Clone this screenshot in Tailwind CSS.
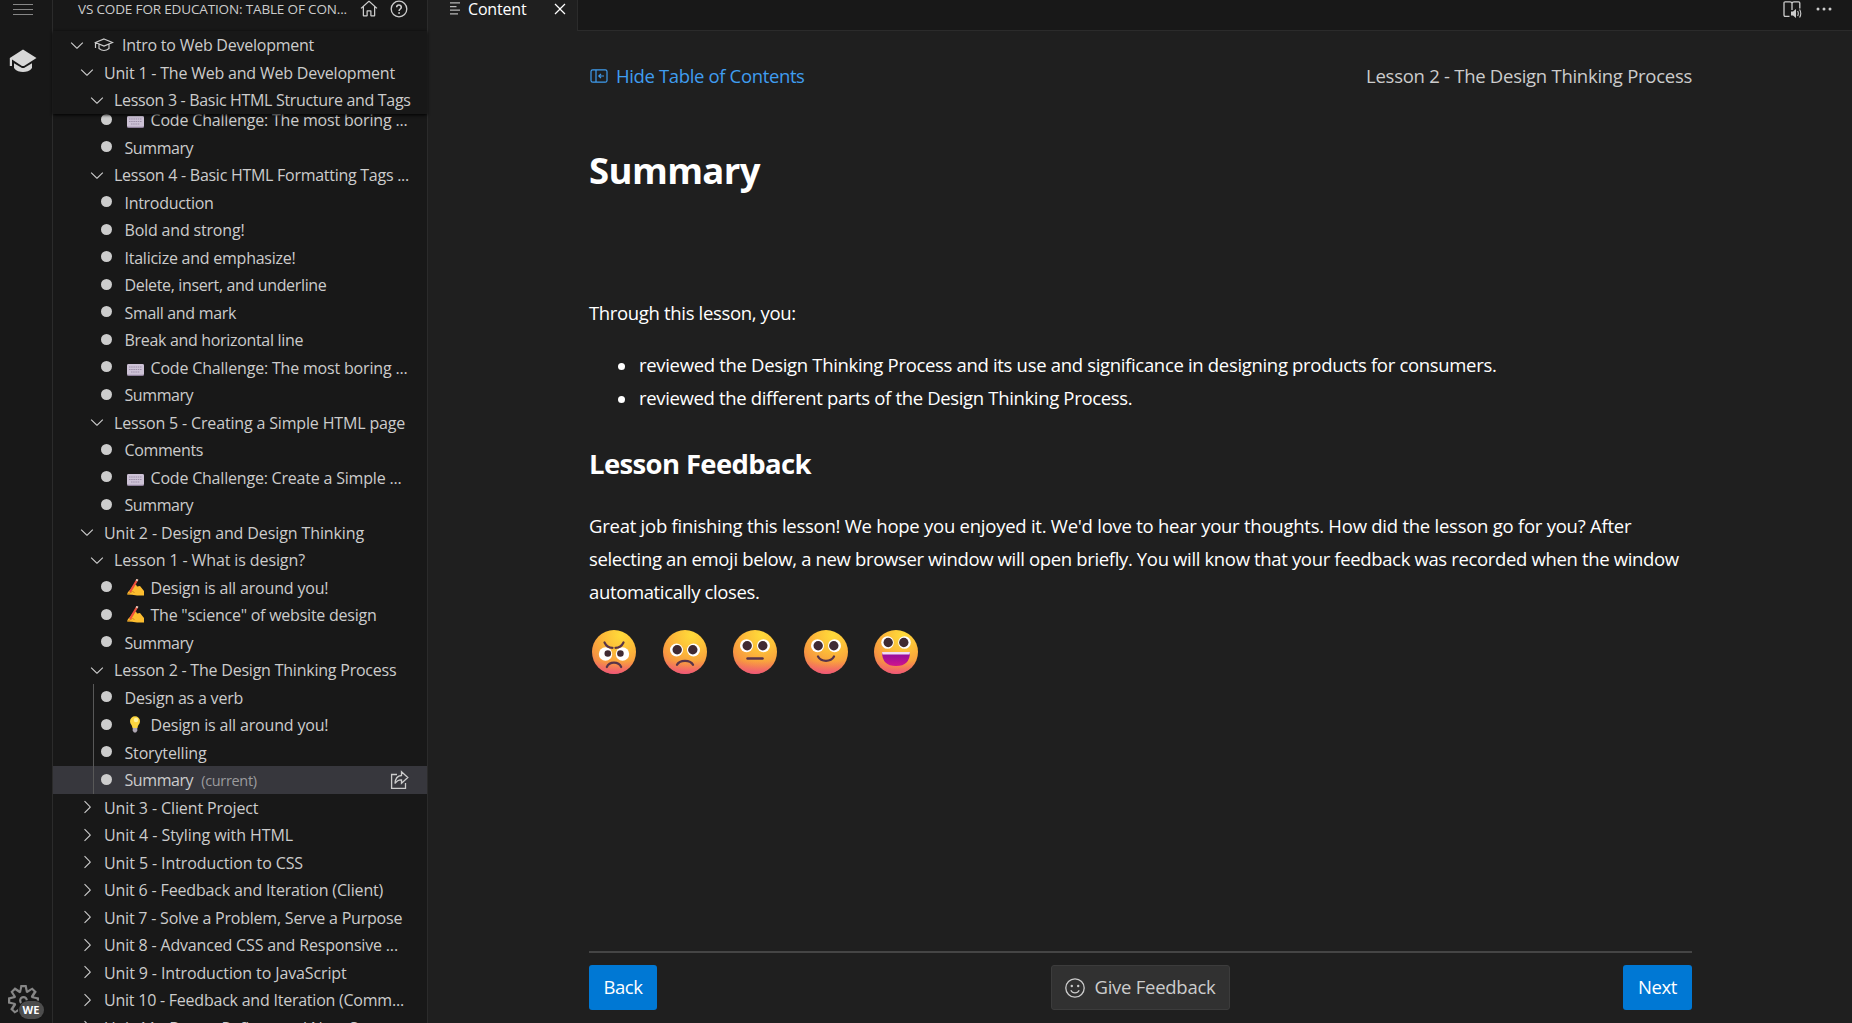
<!DOCTYPE html>
<html lang="en">
<head>
<meta charset="utf-8">
<title>VS Code for Education</title>
<script src="https://cdn.jsdelivr.net/npm/@tailwindcss/browser@4"></script>
</head>
<body class="h-[1023px] w-[1852px] overflow-hidden bg-[#1f1f1f] font-['Open_Sans','Noto_Sans',sans-serif] text-[#cccccc]">
<svg class="absolute h-0 w-0">
  <defs>
    <radialGradient id="face" cx=".65" cy=".12" r=".95"><stop offset="0" stop-color="#ffdb3a"/><stop offset=".4" stop-color="#fcbc38"/><stop offset=".75" stop-color="#f79840"/><stop offset="1" stop-color="#f0705c"/></radialGradient>
    <linearGradient id="chin" x1="0" y1="0" x2="0" y2="1"><stop offset=".7" stop-color="#f4646c" stop-opacity="0"/><stop offset="1" stop-color="#f0527c" stop-opacity=".9"/></linearGradient>
    <linearGradient id="mouth" x1="0" y1="0" x2="0" y2="1"><stop offset="0" stop-color="#8a0ca0"/><stop offset="1" stop-color="#d0148c"/></linearGradient>
    <g id="head"><circle cx="22" cy="22" r="22" fill="url(#face)"/><circle cx="22" cy="22" r="22" fill="url(#chin)"/></g>
  </defs>
</svg>
<div class="flex h-full">
  <nav class="flex w-[53px] shrink-0 flex-col items-center justify-between border-r border-[#2b2b2b] bg-[#181818]">
    <div class="flex flex-col items-center">
      <svg class="mt-[3px] ml-[-6px] h-[14px] w-5" viewBox="0 0 20 14" stroke="#868686" stroke-width="1"><path d="M0 1.5h20M0 6.5h20M0 11.5h20"/></svg>
      <svg class="mt-[32px] ml-[-6px] h-[24px] w-[28px]" viewBox="0 0 28 24" fill="#d7d7d7"><path d="M14 .5 27.5 9 15 17h-2L3 10.5V17H.8V9z"/><path d="M5 14.2 13 19h2l8-4.800V19c-2 3-6 4-9 4s-7-1-9-4z"/></svg>
    </div>
    <div class="relative mr-[6px] mb-[7px] h-[31px] w-[31px]">
      <svg class="h-[31px] w-[31px]" viewBox="1 1 14 14" fill="#868686"><path d="M9.1 4.400L8.600 2H7.400l-.5 2.400-.7.3-2-1.300-.9.8 1.300 2-.2.7-2.400.5v1.200l2.400.5.3.8-1.300 2 .8.8 2-1.300.8.3.4 2.300h1.200l.5-2.400.8-.3 2 1.300.8-.8-1.300-2 .3-.8 2.300-.4V7.400l-2.400-.5-.3-.8 1.300-2-.8-.8-2 1.300-.7-.2zM9.400 1l.5 2.400L12 2.100l2 2-1.400 2.100 2.400.4v2.800l-2.400.5L14 12l-2 2-2.100-1.400-.5 2.400H6.600l-.5-2.400L4 13.900l-2-2 1.400-2.100L1 9.400V6.600l2.400-.5L2.100 4l2-2 2.100 1.400.4-2.400h2.800zm.6 7c0 1.100-.9 2-2 2s-2-.9-2-2 .9-2 2-2 2 .9 2 2zM8 9c.6 0 1-.4 1-1s-.4-1-1-1-1 .4-1 1 .4 1 1 1z"/></svg>
      <span class="absolute top-[16px] left-[11px] flex h-[18px] w-[25px] items-center justify-center rounded-full bg-[#4d4d4d] text-[11px] font-bold text-white ring-1 ring-[#181818]">WE</span>
    </div>
  </nav>
  <aside class="flex w-[375px] shrink-0 flex-col border-r border-[#2b2b2b] bg-[#181818]">
    <header class="flex h-[31px] shrink-0 items-start pl-[25px]">
      <span class="w-[281px] text-[13.500px] leading-[18px] tracking-[-0.150px] whitespace-nowrap">VS CODE FOR EDUCATION: TABLE OF CON...</span>
      <svg class="mt-[-1px] h-5 w-5" viewBox="0 0 16 16" fill="#cccccc"><path d="M8.360 1.370l6.360 5.800-.71.71L13 6.964v6.526l-.5.5h-3l-.5-.5v-3.500H7v3.500l-.5.5h-3l-.5-.5V6.972L2 7.880l-.71-.71 6.350-5.800h.72zM4 6.063v6.927h2v-3.500l.5-.5h3l.5.5v3.500h2V6.057L8 2.430 4 6.063z"/></svg>
      <svg class="mt-[-1px] ml-[10px] h-5 w-5" viewBox="0 0 20 20" fill="none" stroke="#cccccc"><circle cx="10" cy="10" r="7.800" stroke-width="1.300"/><path d="M7.700 8.300c0-3 4.600-3 4.600-.1 0 1.800-2.200 1.800-2.200 3.800" stroke-width="1.600"/><path d="M9.200 13.200h1.800v1.600h-1.800z" fill="#cccccc" stroke="none"/></svg>
    </header>
    <div id="pinned" class="relative z-10 shrink-0 bg-[#181818] shadow-[0_1px_3px_#000]"></div>
    <div class="min-h-0 grow overflow-hidden"><div id="tree" class="mt-[-7.500px]"></div></div>
  </aside>
  <main class="flex min-w-0 grow flex-col">
    <div class="flex h-[31px] shrink-0">
      <div class="flex w-[150px] shrink-0 items-start border-r border-[#2b2b2b] pl-[22px]">
        <svg class="mt-[2px] h-[13px] w-[11px]" viewBox="0 0 11 13" stroke="#b8b8b8" stroke-width="1.200"><path d="M0 .8h10M0 4.600h6.500M0 8.200h10M0 11.800h8"/></svg>
        <span class="ml-[7px] w-[82px] text-[16px] leading-[19px] tracking-[-0.170px] whitespace-nowrap text-white">Content</span>
        <svg class="mt-[-1px] h-5 w-5" viewBox="0 0 16 16" fill="#fff"><path d="M8 8.707l3.646 3.647.708-.707L8.707 8l3.647-3.646-.707-.708L8 7.293 4.354 3.646l-.707.708L7.293 8l-3.646 3.646.707.708L8 8.707z"/></svg>
      </div>
      <div class="flex grow items-start justify-end border-b border-[#2b2b2b] bg-[#181818] pr-[20px]">
        <svg class="mt-[1px] h-[18px] w-[19px]" viewBox="0 0 19 18" fill="none" stroke="#cccccc" stroke-width="1.300"><path d="M6.500 15.300H2.200Q1 15.300 1 14V2Q1 .8 2.200.8H7q1.800 0 2 1.500V9M9 2.300Q9.200.8 11 .8h4.500q1.300 0 1.300 1.200v5.500"/><path d="M8 10.600h2l3-2.600v9l-3-2.600H8z" fill="#cccccc" stroke="none"/><path d="M14.600 10q1.400 2.300 0 5M16.600 8.500q2.400 4 0 8" stroke-width="1.100"/></svg>
        <svg class="mt-[7px] ml-[14px] h-1 w-4" viewBox="0 0 16 4" fill="#cccccc"><circle cx="2" cy="2" r="1.500"/><circle cx="8" cy="2" r="1.500"/><circle cx="14" cy="2" r="1.500"/></svg>
      </div>
    </div>
    <section class="ml-[161px] flex w-[1103px] grow flex-col text-[18.500px] leading-[33px] tracking-[-0.340px] whitespace-nowrap text-white">
      <div class="mt-[28px] flex justify-between text-[#cccccc]">
        <a class="flex items-center gap-[8px] pl-px text-[#3f9df0]">
          <svg class="h-[14px] w-[18px]" viewBox="0 0 18 14" fill="none" stroke="currentColor" stroke-width="1.200"><rect x="1" y=".8" width="16" height="12.400" rx="1.800"/><path d="M6 1v12M14 7H9M11 4.800 8.800 7 11 9.200"/></svg>
          <span class="tracking-[-0.360px]">Hide Table of Contents</span>
        </a>
        <span class="tracking-[-0.270px]">Lesson 2 - The Design Thinking Process</span>
      </div>
      <h1 class="mt-[52px] text-[36.500px] leading-[52px] font-bold tracking-[-0.600px]">Summary</h1>
      <p class="mt-[100px]">Through this lesson, you:</p>
      <ul class="mt-[19px] pl-[29px]">
        <li class="flex items-center gap-[14px] tracking-[-0.320px]"><i class="mt-1 size-[7px] rounded-full bg-white"></i>reviewed the Design Thinking Process and its use and significance in designing products for consumers.</li>
        <li class="flex items-center gap-[14px]"><i class="mt-1 size-[7px] rounded-full bg-white"></i>reviewed the different parts of the Design Thinking Process.</li>
      </ul>
      <h2 class="mt-[30px] text-[27.500px] leading-[40px] font-bold tracking-[-0.640px]">Lesson Feedback</h2>
      <p class="mt-[25px]"><span class="tracking-[-0.250px]">Great job finishing this lesson! We hope you enjoyed it. We'd love to hear your thoughts. How did the lesson go for you? After</span><br><span class="tracking-[-0.350px]">selecting an emoji below, a new browser window will open briefly. You will know that your feedback was recorded when the window</span><br><span class="tracking-[-0.360px]">automatically closes.</span></p>
      <div class="mt-[22px] ml-[3px] flex gap-[26.500px]">
        <svg class="size-11" viewBox="0 0 44 44"><use href="#head"/><g fill="#fff"><circle cx="13.500" cy="24" r="6.700"/><circle cx="30.500" cy="24" r="6.700"/></g><g fill="#402a32"><circle cx="15.800" cy="23.500" r="3.300"/><circle cx="28.400" cy="23.500" r="3.300"/></g><path d="M12.500 12.500q2.500 5.300 8 5.300M31.500 12.500q-2.500 5.300-8 5.300M14.800 37q2-4.300 7.200-4.300t7.200 4.300" fill="none" stroke="#583449" stroke-width="2.200" stroke-linecap="round"/></svg>
        <svg class="size-11" viewBox="0 0 44 44"><use href="#head"/><g fill="#fff"><circle cx="13.500" cy="20" r="6.500"/><circle cx="30.500" cy="20" r="6.500"/></g><g fill="#402a32"><circle cx="14.200" cy="19.800" r="4.700"/><circle cx="29.800" cy="19.800" r="4.700"/></g><path d="M14 34.800q2-4 8-4t8 4" fill="none" stroke="#583449" stroke-width="2.300" stroke-linecap="round"/></svg>
        <svg class="size-11" viewBox="0 0 44 44"><use href="#head"/><g fill="#fff"><circle cx="13.500" cy="15.700" r="6.500"/><circle cx="30.500" cy="15.700" r="6.500"/></g><g fill="#402a32"><circle cx="14.200" cy="15.700" r="4.700"/><circle cx="29.800" cy="15.700" r="4.700"/></g><path d="M14.500 28.500h15" stroke="#583449" stroke-width="2.500" stroke-linecap="round"/></svg>
        <svg class="size-11" viewBox="0 0 44 44"><use href="#head"/><g fill="#fff"><circle cx="13.500" cy="15.700" r="6.500"/><circle cx="30.500" cy="15.700" r="6.500"/></g><g fill="#402a32"><circle cx="14.200" cy="15.700" r="4.700"/><circle cx="29.800" cy="15.700" r="4.700"/></g><path d="M14 26.500q2.500 4.300 8 4.300t8-4.300" fill="none" stroke="#583449" stroke-width="2.300" stroke-linecap="round"/></svg>
        <svg class="size-11" viewBox="0 0 44 44"><use href="#head"/><g fill="#fff"><circle cx="13.500" cy="12.500" r="6.300"/><circle cx="30.500" cy="12.500" r="6.300"/></g><g fill="#402a32"><circle cx="14.200" cy="12.500" r="4.700"/><circle cx="29.800" cy="12.500" r="4.700"/></g><path d="M8 22h28q0 14-14 14T8 22z" fill="url(#mouth)"/><path d="M8 22h28l-.5 2.500h-27z" fill="#f0dcf4"/></svg>
      </div>
      <footer class="mt-auto mb-[13px] flex justify-between border-t-2 border-[#454545] pt-3">
        <button class="h-[45px] w-[68px] rounded-[3px] bg-[#0078d4] pb-[2px] tracking-[-0.450px] text-white">Back</button>
        <button class="flex h-[45px] w-[179px] items-center rounded-[3px] border border-[#3c3c3c] bg-[#313131] pl-[13px] tracking-[-0.260px] text-[#cccccc]">
          <svg class="mr-[10px] size-5" viewBox="0 0 20 20" fill="none" stroke="#cccccc" stroke-width="1.300"><circle cx="10" cy="10" r="9.200"/><path d="M5.800 12.200q1.300 2.600 4.200 2.600t4.200-2.600"/><g fill="#cccccc" stroke="none"><circle cx="6.800" cy="8" r="1.200"/><circle cx="13.200" cy="8" r="1.200"/></g></svg>
          <span class="pb-[2px]">Give Feedback</span></button>
        <button class="h-[45px] w-[69px] rounded-[3px] bg-[#0078d4] pb-[2px] tracking-[-0.400px] text-white">Next</button>
      </footer>
    </section>
  </main>
</div>
<script>
const icons = {
  down: '<svg class="h-5 w-5 shrink-0" viewBox="0 0 16 16" fill="#cccccc"><path d="M7.976 10.072l4.357-4.357.62.618L8.284 11h-.618L3 6.333l.619-.618 4.357 4.357z"/></svg>',
  right: '<svg class="h-5 w-5 shrink-0" viewBox="0 0 16 16" fill="#cccccc"><path d="M10.072 8.024L5.715 3.667l.618-.62L11 7.716v.618L6.333 13l-.618-.619 4.357-4.357z"/></svg>',
  dot: '<i class="mr-[12.500px] mb-px size-[11px] shrink-0 rounded-full bg-[#cccccc]"></i>',
  cap: '<svg class="mr-[8px] ml-[7px] h-[14px] w-5 shrink-0" viewBox="0 0 20 14" fill="none" stroke="#cccccc" stroke-width="1.200"><path d="M10 1 18.500 4.500 10 8 1.500 4.500zM1.500 4.500V10M5 6v4.500q5 4 10 0V6"/></svg>',
  key: '<svg class="mt-[5px] mr-[7px] ml-[2px] h-3 w-[17px] shrink-0" viewBox="0 0 17 12"><rect width="17" height="12" rx="1.500" fill="#8d7f99"/><rect width="17" height="10.800" rx="1.500" fill="#cdc2d6"/><path d="M2 3h13M2 5.500h13M4 8h9" stroke="#9c8fa8" stroke-dasharray="1.500 .7"/></svg>',
  hand: '<svg class="mr-[7px] ml-[2px] h-[17px] w-[17px] shrink-0" viewBox="0 0 17 17"><path d="M0 15.500q.5-3 3-4.500l3.500-5L9 5.500l1 2 3-.5 4 5v4.500h-7L5 15.800z" fill="#fcbd2f"/><path d="M1 15 5.500 12.500l2 1" fill="none" stroke="#d98a1c"/><path d="M3 13 9.500 2" stroke="#f0503c" stroke-width="2.200"/><path d="M9.500 2 10.500.3" stroke="#f6c8b8" stroke-width="2.200"/></svg>',
  bulb: '<svg class="mr-[7px] ml-[2px] h-[17px] w-[17px] shrink-0" viewBox="0 0 17 17"><path d="M8 .3a5 5 0 0 1 5 5c0 3-2.300 3.700-2.500 6.700h-5C5.300 9 3 8.300 3 5.300a5 5 0 0 1 5-5z" fill="#fcd53f"/><circle cx="9" cy="4" r="2.200" fill="#fff2a0"/><path d="M5.700 12h4.600v2.800L9 16.500H7l-1.300-1.700z" fill="#b0a8b4"/></svg>',
  share: '<svg class="mr-[18px] ml-auto h-5 w-5 shrink-0" viewBox="0 0 20 20" fill="none" stroke="#cccccc" stroke-width="1.300"><path d="M8 4.500H2.600v13.800H16.500V13"/><path d="M12.500 1.800 18.800 7.500l-6.300 5.700V9.800Q8.500 9.600 6 13.500 6.500 5.800 12.500 5.500z"/></svg>',
};
const indents = { 1: "pl-[14px]", 2: "pl-[24px]", 3: "pl-[34px]", 4: "pl-[48px]" };
// level, marker, emoji, label, letter spacing in px, state
const pinned = [
  [1, "down", "cap", "Intro to Web Development", -0.24],
  [2, "down", "", "Unit 1 - The Web and Web Development", -0.2],
  [3, "down", "", "Lesson 3 - Basic HTML Structure and Tags", -0.32],
];
const rows = [
  [4, "dot", "key", "Code Challenge: The most boring ...", -0.18],
  [4, "dot", "", "Summary", -0.42],
  [3, "down", "", "Lesson 4 - Basic HTML Formatting Tags ...", -0.27],
  [4, "dot", "", "Introduction", -0.3],
  [4, "dot", "", "Bold and strong!", -0.18],
  [4, "dot", "", "Italicize and emphasize!", -0.24],
  [4, "dot", "", "Delete, insert, and underline", -0.35],
  [4, "dot", "", "Small and mark", -0.32],
  [4, "dot", "", "Break and horizontal line", -0.32],
  [4, "dot", "key", "Code Challenge: The most boring ...", -0.18],
  [4, "dot", "", "Summary", -0.42],
  [3, "down", "", "Lesson 5 - Creating a Simple HTML page", -0.16],
  [4, "dot", "", "Comments", -0.37],
  [4, "dot", "key", "Code Challenge: Create a Simple ...", -0.2],
  [4, "dot", "", "Summary", -0.42],
  [2, "down", "", "Unit 2 - Design and Design Thinking", -0.11],
  [3, "down", "", "Lesson 1 - What is design?", -0.11],
  [4, "dot", "hand", "Design is all around you!", -0.17],
  [4, "dot", "hand", 'The "science" of website design', -0.23],
  [4, "dot", "", "Summary", -0.42],
  [3, "down", "", "Lesson 2 - The Design Thinking Process", -0.22],
  [4, "dot", "", "Design as a verb", -0.21, "guide"],
  [4, "dot", "bulb", "Design is all around you!", -0.17, "guide"],
  [4, "dot", "", "Storytelling", -0.16, "guide"],
  [4, "dot", "", "Summary", -0.42, "current"],
  [2, "right", "", "Unit 3 - Client Project", -0.11],
  [2, "right", "", "Unit 4 - Styling with HTML", -0.06],
  [2, "right", "", "Unit 5 - Introduction to CSS", -0.1],
  [2, "right", "", "Unit 6 - Feedback and Iteration (Client)", -0.16],
  [2, "right", "", "Unit 7 - Solve a Problem, Serve a Purpose", -0.21],
  [2, "right", "", "Unit 8 - Advanced CSS and Responsive ...", -0.17],
  [2, "right", "", "Unit 9 - Introduction to JavaScript", -0.12],
  [2, "right", "", "Unit 10 - Feedback and Iteration (Comm...", -0.23],
  [2, "right", "", "Unit 11 - Demo, Reflect, and Next S...", -0.18],
];
const row = ([level, marker, emoji, label, spacing, state]) => {
  const gap = marker === "dot" || emoji === "cap" ? "" : "ml-[7px]";
  const extra = state === "current" ? '<span class="ml-2 pt-[2px] text-[14.500px] tracking-[-0.330px] text-[#9b9b9d]">(current)</span>' + icons.share : "";
  const guide = state ? '<i class="absolute top-0 left-[40px] h-full w-px bg-[#585858]"></i>' : "";
  return `<div class="relative flex h-[27.500px] items-center text-[16px] leading-[27px] whitespace-nowrap ${indents[level]} ${state === "current" ? "bg-[#37373d]" : ""}">${guide}${icons[marker]}${emoji ? icons[emoji] : ""}<span class="pt-[2px] ${gap}" style="letter-spacing:${spacing}px">${label}</span>${extra}</div>`;
};
document.getElementById("pinned").innerHTML = pinned.map(row).join("");
document.getElementById("tree").innerHTML = rows.map(row).join("");
</script>
</body>
</html>
